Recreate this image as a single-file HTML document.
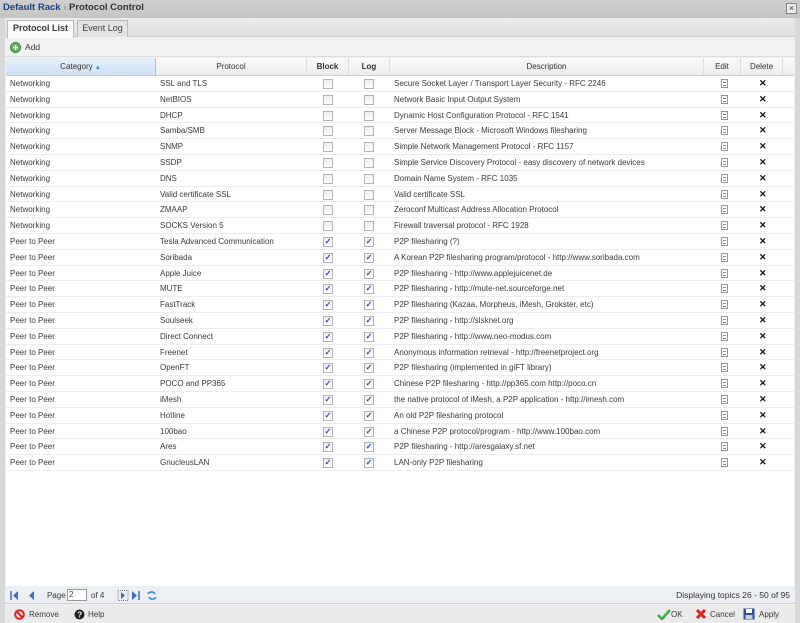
<!DOCTYPE html>
<html><head><style>
*{box-sizing:border-box;margin:0;padding:0}
body{width:800px;height:623px;overflow:hidden;background:#d8d8d8;font-family:"Liberation Sans",sans-serif;font-size:8px;color:#3a3a3a;position:relative}
.title{position:absolute;left:0;top:0;width:800px;height:18px;background:linear-gradient(#cfcfcf,#c4c4c4);}
.title b{position:absolute;left:3px;top:2px;font-size:9.5px;color:#15428b}
.title span{color:#333;font-weight:bold}
.close{position:absolute;right:3px;top:3px;width:11px;height:11px;border:1px solid #888;background:#eee;font-size:9px;line-height:9px;text-align:center}
.panel{position:absolute;left:5px;top:18px;width:790px;height:605px;background:#f0f0f0}
.tabbar{position:absolute;left:0;top:0;width:790px;height:19px;background:linear-gradient(#ececec,#dedede);border-bottom:1px solid #ccc}
.tab{position:absolute;top:2px;height:17px;border:1px solid #bbb;border-bottom:none;background:#e4e4e4;font-size:9px;line-height:15px;text-align:center}
.tab.on{background:#fafafa;font-weight:bold;height:18px}
.tb{position:absolute;left:0;top:20px;width:790px;height:19px;background:#f1f1f1;border-bottom:1px solid #ddd}
.grid{position:absolute;left:1px;top:40px;width:788px;height:528px;background:#fff}
.hdr{position:absolute;left:0;top:0;height:18px;width:788px;background:linear-gradient(#fafafa,#ececec);border-bottom:1px solid #d0d0d0}
.c{position:absolute;top:0;height:100%;border-right:1px solid #ddd;white-space:nowrap;overflow:hidden}
.hdr .c{text-align:center;line-height:17px;color:#333}
.row{position:absolute;left:0;width:788px;height:15.8px;border-bottom:1px solid #ededed}
.row .c{border-right:none;line-height:15px;padding-left:4px}
.cb{position:absolute;top:3px;width:10px;height:10px;border:1px solid #b4b4b4;background:linear-gradient(#eee,#fff);font-size:8px;line-height:8px;text-align:center;color:#2a4fa0;font-weight:bold}
.ed{position:absolute;top:3px;left:715px;width:7px;height:9px;border:1px solid #999;background:repeating-linear-gradient(#fff 0 1px,#888 1px 2px);background-size:3px 3px;background-position:1px 1px;background-repeat:repeat-y}
.x{position:absolute;left:753px;top:0;font-size:9px;font-weight:bold;line-height:15px;color:#111}
.pg{position:absolute;left:0;top:568px;width:790px;height:18px;background:#eceff3;border-bottom:1px solid #c8d2de}
.bb{position:absolute;left:0;top:587px;width:790px;height:18px;background:#ebebeb}
</style></head><body>
<div class="title"><b>Default Rack <span style="color:#888;font-weight:normal">›</span> <span>Protocol Control</span></b><div class="close">×</div></div>
<div class="panel">
<div class="tabbar">
<div class="tab on" style="left:2px;width:67px">Protocol List</div>
<div class="tab" style="left:72px;width:51px">Event Log</div>
</div>
<div class="tb"><svg style="position:absolute;left:5px;top:4px" width="11" height="11"><circle cx="5.5" cy="5.5" r="5" fill="#5cb85c" stroke="#3a8a3a"/><path d="M3 5.5h5M5.5 3v5" stroke="#fff" stroke-width="1.6"/></svg><span style="position:absolute;left:20px;top:4px;font-size:8.5px">Add</span></div>
<div class="grid">
<div class="hdr">
<div class="c" style="left:0;width:150px;background:linear-gradient(#e6f0fb,#cfe0f5);border-right-color:#9bbbe0">Category <span style="color:#5a7fc0;font-size:6px">▲</span></div>
<div class="c" style="left:150px;width:151px">Protocol</div>
<div class="c" style="left:301px;width:42px;font-weight:bold">Block</div>
<div class="c" style="left:343px;width:41px;font-weight:bold">Log</div>
<div class="c" style="left:384px;width:314px">Description</div>
<div class="c" style="left:698px;width:37px">Edit</div>
<div class="c" style="left:735px;width:42px">Delete</div>
</div>
<div id="rows"></div>
</div>
<div class="pg">
<svg style="position:absolute;left:5px;top:4px" width="150" height="11">
<path d="M1 1v9" stroke="#3a6fc7" stroke-width="1.5"/><path d="M8 1v9L3 5.5z" fill="#3a6fc7"/>
<path d="M24 1v9L19 5.5z" fill="#3a6fc7"/>
<rect x="108" y="0.5" width="10" height="10" fill="none" stroke="#777" stroke-dasharray="1,1"/><path d="M111 2v7l4-3.5z" fill="#3a6fc7"/>
<path d="M122 1v9l5-4.5z" fill="#3a6fc7"/><path d="M129 1v9" stroke="#3a6fc7" stroke-width="1.5"/>
<path d="M145 4a4 4 0 0 0-7 0M139 7a4 4 0 0 0 7 0" stroke="#3a8ad0" stroke-width="1.6" fill="none"/>
</svg>
<span style="position:absolute;left:42px;top:5px">Page</span>
<div style="position:absolute;left:62px;top:3px;width:20px;height:12px;border:1px solid #999;background:#fff;font-size:8px;padding-left:1px">2</div>
<span style="position:absolute;left:86px;top:5px">of 4</span>
<span style="position:absolute;right:5px;top:4px;font-size:8.5px;color:#333">Displaying topics 26 - 50 of 95</span>
</div>
<div class="bb">
<svg style="position:absolute;left:9px;top:4px" width="11" height="11"><circle cx="5.5" cy="5.5" r="4.3" fill="none" stroke="#d22" stroke-width="2"/><path d="M2.5 2.5l6 6" stroke="#d22" stroke-width="2"/></svg>
<span style="position:absolute;left:24px;top:5px">Remove</span>
<svg style="position:absolute;left:69px;top:4px" width="11" height="11"><circle cx="5.5" cy="5.5" r="5" fill="#222"/><text x="3.3" y="8.5" font-size="8" fill="#fff" font-weight="bold" font-family="Liberation Sans">?</text></svg>
<span style="position:absolute;left:83px;top:5px">Help</span>
<svg style="position:absolute;left:652px;top:4px" width="14" height="11"><path d="M1 6l4 4 8-9" stroke="#3cb043" stroke-width="2.5" fill="none"/></svg>
<span style="position:absolute;left:666px;top:5px">OK</span>
<svg style="position:absolute;left:690px;top:3px" width="12" height="12"><path d="M2 2l8 8M10 2l-8 8" stroke="#d22" stroke-width="3"/></svg>
<span style="position:absolute;left:705px;top:5px">Cancel</span>
<svg style="position:absolute;left:738px;top:3px" width="12" height="12"><rect x="0.5" y="0.5" width="11" height="11" fill="#2b4f9a"/><rect x="3" y="1" width="6" height="4" fill="#fff"/><rect x="2.5" y="7" width="7" height="4" fill="#ccd"/></svg>
<span style="position:absolute;left:754px;top:5px">Apply</span>
</div>
</div>
<script>
var d=[["Networking","SSL and TLS",0,"Secure Socket Layer / Transport Layer Security - RFC 2246"],
["Networking","NetBIOS",0,"Network Basic Input Output System"],
["Networking","DHCP",0,"Dynamic Host Configuration Protocol - RFC 1541"],
["Networking","Samba/SMB",0,"Server Message Block - Microsoft Windows filesharing"],
["Networking","SNMP",0,"Simple Network Management Protocol - RFC 1157"],
["Networking","SSDP",0,"Simple Service Discovery Protocol - easy discovery of network devices"],
["Networking","DNS",0,"Domain Name System - RFC 1035"],
["Networking","Valid certificate SSL",0,"Valid certificate SSL"],
["Networking","ZMAAP",0,"Zeroconf Multicast Address Allocation Protocol"],
["Networking","SOCKS Version 5",0,"Firewall traversal protocol - RFC 1928"],
["Peer to Peer","Tesla Advanced Communication",1,"P2P filesharing (?)"],
["Peer to Peer","Soribada",1,"A Korean P2P filesharing program/protocol - http://www.soribada.com"],
["Peer to Peer","Apple Juice",1,"P2P filesharing - http://www.applejuicenet.de"],
["Peer to Peer","MUTE",1,"P2P filesharing - http://mute-net.sourceforge.net"],
["Peer to Peer","FastTrack",1,"P2P filesharing (Kazaa, Morpheus, iMesh, Grokster, etc)"],
["Peer to Peer","Soulseek",1,"P2P filesharing - http://slsknet.org"],
["Peer to Peer","Direct Connect",1,"P2P filesharing - http://www.neo-modus.com"],
["Peer to Peer","Freenet",1,"Anonymous information retrieval - http://freenetproject.org"],
["Peer to Peer","OpenFT",1,"P2P filesharing (implemented in giFT library)"],
["Peer to Peer","POCO and PP365",1,"Chinese P2P filesharing - http://pp365.com http://poco.cn"],
["Peer to Peer","iMesh",1,"the native protocol of iMesh, a P2P application - http://imesh.com"],
["Peer to Peer","Hotline",1,"An old P2P filesharing protocol"],
["Peer to Peer","100bao",1,"a Chinese P2P protocol/program - http://www.100bao.com"],
["Peer to Peer","Ares",1,"P2P filesharing - http://aresgalaxy.sf.net"],
["Peer to Peer","GnucleusLAN",1,"LAN-only P2P filesharing"]];
var h="";d.forEach(function(r,i){var k=r[2]?"✓":"";
h+='<div class="row" style="top:'+(18+i*15.8)+'px"><div class="c" style="left:0;width:150px">'+r[0]+'</div><div class="c" style="left:150px;width:151px">'+r[1]+'</div><div class="cb" style="left:317px">'+k+'</div><div class="cb" style="left:358px">'+k+'</div><div class="c" style="left:384px;width:314px">'+r[3]+'</div><div class="ed"></div><div class="x">✕</div></div>';});
document.getElementById("rows").innerHTML=h;
</script>
</body></html>
